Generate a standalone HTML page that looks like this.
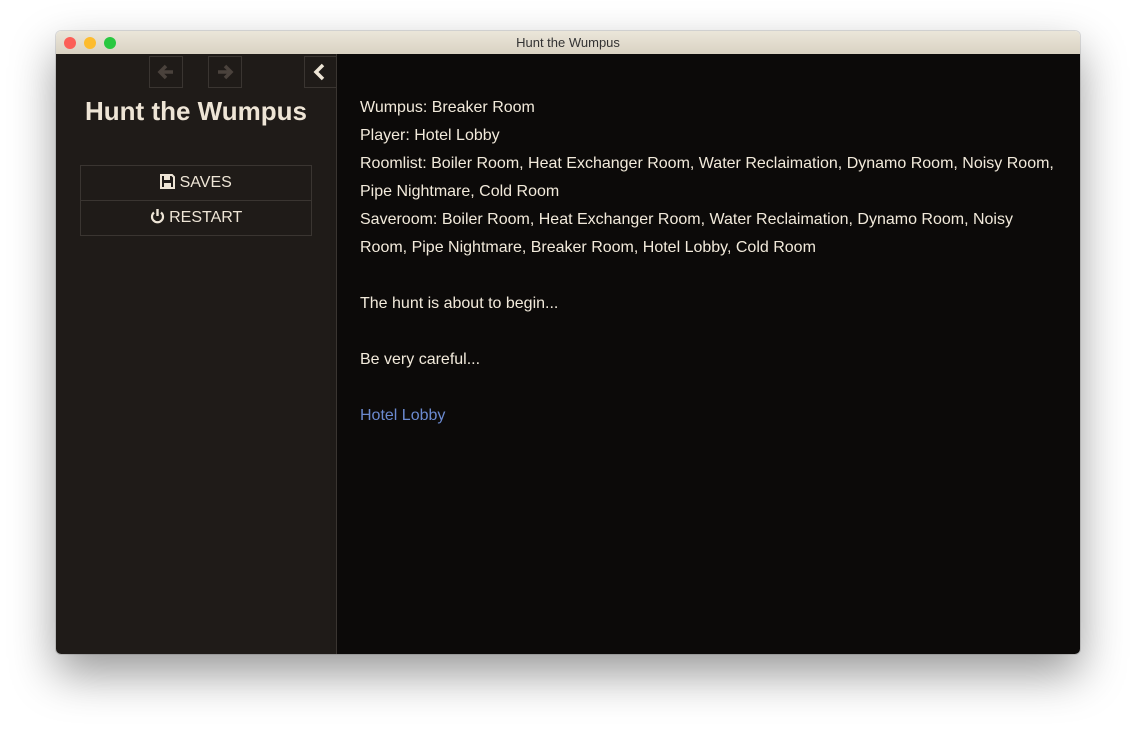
<!DOCTYPE html>
<html><head><style>
body{margin:0;width:1136px;height:734px;background:#fff;font-family:"Liberation Sans",sans-serif;position:relative;overflow:hidden}
.win{position:absolute;left:56px;top:31px;width:1024px;height:623px;border-radius:5px;overflow:hidden;box-shadow:0 20px 45px rgba(0,0,0,.4),0 0 0 1px rgba(0,0,0,.12)}
.tb{height:23px;background:linear-gradient(#ebe6da,#d9d2c2);text-align:center;font-size:13px;line-height:23px;color:#333;position:relative}
.dot{position:absolute;top:6px;width:12px;height:12px;border-radius:50%}
.side{position:absolute;left:0;top:23px;width:280px;height:600px;background:#1f1b18;border-right:1px solid #3a3531}
.main{position:absolute;left:281px;top:23px;right:0;height:600px;background:#0c0a09;color:#f2eadb;font-size:16px;line-height:28px;padding:40px 0 0 23px}
.nb{position:absolute;top:2px;width:34px;height:32px;border:1px solid #3a3531;box-sizing:border-box;text-align:center}
.nb svg{margin-top:6px}
h1{position:absolute;left:0;width:280px;top:42px;margin:0;text-align:center;color:#eee5d6;font-size:26px;font-weight:bold}
.btns{position:absolute;left:24px;top:111px;width:230px;border:1px solid #3a3531}
.btn{height:34px;line-height:34px;text-align:center;color:#eee5d6;font-size:16px}
.btn+.btn{border-top:1px solid #3a3531}
a{color:#6b8ad0;text-decoration:none}
p{margin:0}
</style></head><body>
<div class="win">
<div class="tb"><span class="dot" style="left:8px;background:#fc5f57"></span><span class="dot" style="left:28px;background:#fdbc2e"></span><span class="dot" style="left:48px;background:#29c840"></span>Hunt the Wumpus</div>
<div class="side">
<div class="nb" style="left:93px"><svg width="18" height="18" viewBox="0 0 18 18"><path d="M16 9H4M9 3L3 9l6 6" stroke="#4a423c" stroke-width="3.5" fill="none"/></svg></div>
<div class="nb" style="left:152px"><svg width="18" height="18" viewBox="0 0 18 18"><path d="M2 9h12M9 3l6 6-6 6" stroke="#4a423c" stroke-width="3.5" fill="none"/></svg></div>
<div class="nb" style="left:248px;width:34px;border-right:none"><svg width="14" height="18" viewBox="0 0 14 18" style="margin-top:6px;margin-left:-6px"><path d="M11 2L4 9l7 7" stroke="#eee5d6" stroke-width="3.5" fill="none"/></svg></div>
<h1>Hunt the Wumpus</h1>
<div class="btns">
<div class="btn"><svg width="15" height="15" viewBox="0 0 15 15" style="vertical-align:-2px"><path d="M1 1h11l2 2v11H1z" fill="none" stroke="#eee5d6" stroke-width="2"/><rect x="4" y="2" width="6" height="4" fill="#eee5d6"/><rect x="4" y="9" width="7" height="4" fill="#eee5d6"/></svg> SAVES</div>
<div class="btn"><svg width="15" height="15" viewBox="0 0 15 15" style="vertical-align:-2px"><path d="M4 3.5A5.5 5.5 0 1 0 11 3.5" fill="none" stroke="#eee5d6" stroke-width="2.2"/><path d="M7.5 0v7" stroke="#eee5d6" stroke-width="2.4"/></svg> RESTART</div>
</div>
</div>
<div class="main">
<p>Wumpus: Breaker Room<br>Player: Hotel Lobby<br>Roomlist: Boiler Room, Heat Exchanger Room, Water Reclaimation, Dynamo Room, Noisy Room,<br>Pipe Nightmare, Cold Room<br>Saveroom: Boiler Room, Heat Exchanger Room, Water Reclaimation, Dynamo Room, Noisy<br>Room, Pipe Nightmare, Breaker Room, Hotel Lobby, Cold Room</p>
<p style="margin-top:28px">The hunt is about to begin...</p>
<p style="margin-top:28px">Be very careful...</p>
<p style="margin-top:28px"><a>Hotel Lobby</a></p>
</div>
</div>
</body></html>
